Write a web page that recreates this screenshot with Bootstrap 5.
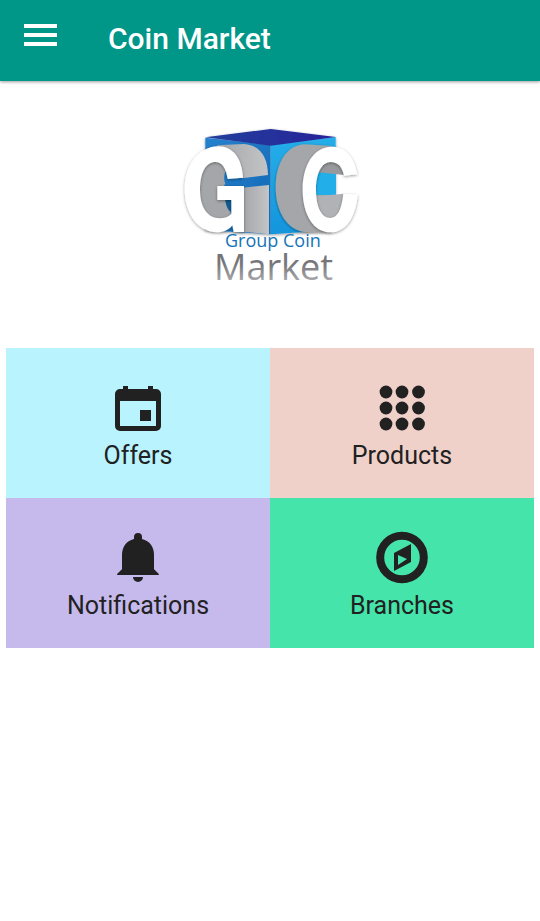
<!DOCTYPE html>
<html lang="en">
<head>
<meta charset="utf-8">
<meta name="viewport" content="width=device-width, initial-scale=1">
<title>Coin Market</title>
<link rel="stylesheet" href="https://cdn.jsdelivr.net/npm/bootstrap@5.3.0/dist/css/bootstrap.min.css">
<style>
  body { font-family: Roboto, "Liberation Sans", sans-serif; color: #212121; background: #fff; }
  .app-bar { background: #009688; box-shadow: 0 1px 3px rgba(0, 0, 0, .4); padding: 19px 24px 22px; gap: 51px; }
  .app-title { font-size: 30px; line-height: 40px; font-weight: 500; color: #fff; }
  .menu-btn { line-height: 1; margin-bottom: 8px; }
  .logo-area { padding: 14px 0 53px; }
  .tiles { padding: 0 6px; }
  .tile { height: 150px; padding-top: 30px; color: #212121; font-size: 25px; line-height: 36px; }
  .tile svg { width: 60px; height: 60px; fill: #212121; }
  .tile-offers { background: #b8f3fe; }
  .tile-products { background: #efd1c9; }
  .tile-notifications { background: #c6baed; }
  .tile-branches { background: #45e4aa; }
</style>
</head>
<body>
<header class="app-bar d-flex align-items-center">
  <button type="button" class="menu-btn btn p-0 border-0 rounded-0" aria-label="Open menu">
    <svg class="d-block" width="33" height="22" viewBox="0 0 33 22" fill="#fff" aria-hidden="true"><path d="M0 0h33v4H0zM0 9h33v4H0zM0 18h33v4H0z"/></svg>
  </button>
  <h1 class="app-title m-0">Coin Market</h1>
</header>
<main>
  <div class="logo-area text-center">
    <svg width="200" height="200" viewBox="0 0 200 200" role="img" aria-label="Group Coin Market">
      <defs>
        <linearGradient id="roof"><stop offset="0" stop-color="#233f9c"/><stop offset="1" stop-color="#27239a"/></linearGradient>
        <linearGradient id="wallLeft" x1="0" y1="0" x2="1" y2="1"><stop offset="0" stop-color="#2581ce"/><stop offset="1" stop-color="#1268b4"/></linearGradient>
        <linearGradient id="wallRight" x1="0" y1="0" x2="0" y2="1"><stop offset="0" stop-color="#25aeea"/><stop offset="1" stop-color="#1695dc"/></linearGradient>
        <linearGradient id="steel" x1="0" y1="0" x2="0" y2="1"><stop offset="0" stop-color="#707074"/><stop offset=".45" stop-color="#77777b"/><stop offset=".85" stop-color="#b0b0b3"/></linearGradient>
        <linearGradient id="side"><stop offset="0" stop-color="#a5a6a9"/><stop offset="1" stop-color="#c3c4c6"/></linearGradient>
        <filter id="soft" x="-20%" y="-20%" width="140%" height="140%"><feDropShadow dx="0" dy="3" stdDeviation="5" flood-color="#000" flood-opacity=".4"/></filter>
      </defs>
      <g transform="scale(.33333)">
        <g filter="url(#soft)">
          <path fill="url(#wallLeft)" d="M106 128 302 150V418L106 405Z"/>
          <path fill="url(#wallRight)" d="M302 150 497 126V405L302 418Z"/>
          <path fill="url(#roof)" d="M106 127 302 102 497 126 302 152Z"/>
        </g>
        <path fill="#a5a6a9" d="M80 290C80 220 100 190 140 190C162 192 172 208 172 222C162 232 160 252 166 266L142 300L168 314C168 335 174 345 182 350V375L145 390C100 390 80 345 80 290Z"/>
        <path fill="#125b8f" d="M165 312H187V354C176 346 168 334 165 312Z"/>
        <path fill="url(#side)" d="M140 151 222 147C270 150 294 188 294 240L216 250 174 178Z"/>
        <path fill="url(#side)" d="M218 278 297 270V418L218 410Z"/>
        <g filter="url(#soft)">
          <path fill="#fff" d="M219 248C216 190 189 153 143 154C84 156 44 212 44 282C44 358 86 412 142 412C160 412 177 405 187 391L191 411H222V273H142V315H184V356C177 365 164 370 149 370C111 370 90 334 90 286C90 233 107 201 137 201C157 201 168 220 173 252Z"/>
        </g>
        <g filter="url(#soft)">
          <path fill="#a5a6a9" d="M485 153 402 148C350 151 317 205 317 276C317 351 352 405 405 411L485 412Z"/>
        </g>
        <path fill="#22aee9" d="M437 230H498V300H437Z"/>
        <path fill="#98999c" d="M445 232C449 208 466 196 486 196C507 196 519 212 522 240Z"/>
        <path fill="#b1b2b5" d="M437 304 521 296C518 345 505 374 481 374C450 374 437 345 437 304Z"/>
        <g filter="url(#soft)">
          <path fill="#fff" d="M562 238C553 185 525 155 485 155C430 156 398 212 398 284C398 358 430 412 482 412C528 411 557 367 563 299L520 297C515 344 502 369 481 369C453 369 438 333 438 285C438 234 455 201 482 201C504 201 517 216 522 242Z"/>
        </g>
      </g>
      <text x="55" y="152" font-family="Open Sans, Noto Sans, sans-serif" font-size="18" fill="#1673b7">Group Coin</text>
      <text x="44" y="185" font-family="Open Sans, Noto Sans, sans-serif" font-size="36" fill="url(#steel)">Market</text>
    </svg>
  </div>
  <nav class="tiles" aria-label="Sections">
    <div class="row g-0">
      <div class="col-6"><a href="#offers" class="tile tile-offers d-flex flex-column align-items-center text-decoration-none">
        <svg viewBox="0 0 60 60" aria-hidden="true"><path fill-rule="evenodd" d="M15 8h5v3h20V8h5v3h3a5 5 0 0 1 5 5v32a5 5 0 0 1-5 5H12a5 5 0 0 1-5-5V16a5 5 0 0 1 5-5h3zM12 23v25h36V23zM32 32h11v11H32z"/></svg>
        <span>Offers</span></a></div>
      <div class="col-6"><a href="#products" class="tile tile-products d-flex flex-column align-items-center text-decoration-none">
        <svg viewBox="0 0 60 60" aria-hidden="true"><g id="dots"><circle cx="14" cy="14" r="6.4"/><circle cx="30" cy="14" r="6.4"/><circle cx="46.500" cy="14" r="6.4"/></g><use href="#dots" y="16"/><use href="#dots" y="32"/></svg>
        <span>Products</span></a></div>
      <div class="col-6"><a href="#notifications" class="tile tile-notifications d-flex flex-column align-items-center text-decoration-none">
        <svg viewBox="0 0 60 60" aria-hidden="true"><path d="M26 11V9a4 4 0 0 1 8 0v2c8 2 12 8 12 16v14c0 1 5 4 5 6H9c0-2 5-5 5-6V27c0-8 4-14 12-16zM25 49h10a5 5 0 0 1-10 0z"/></svg>
        <span>Notifications</span></a></div>
      <div class="col-6"><a href="#branches" class="tile tile-branches d-flex flex-column align-items-center text-decoration-none">
        <svg viewBox="0 0 60 60" aria-hidden="true"><circle cx="30" cy="29.500" r="21.800" fill="none" stroke="#212121" stroke-width="8"/><path fill-rule="evenodd" d="M39 16V34L22 43V25ZM26 27V37L35 31Z"/></svg>
        <span>Branches</span></a></div>
    </div>
  </nav>
</main>
<script src="https://cdn.jsdelivr.net/npm/bootstrap@5.3.0/dist/js/bootstrap.bundle.min.js"></script>
</body>
</html>
